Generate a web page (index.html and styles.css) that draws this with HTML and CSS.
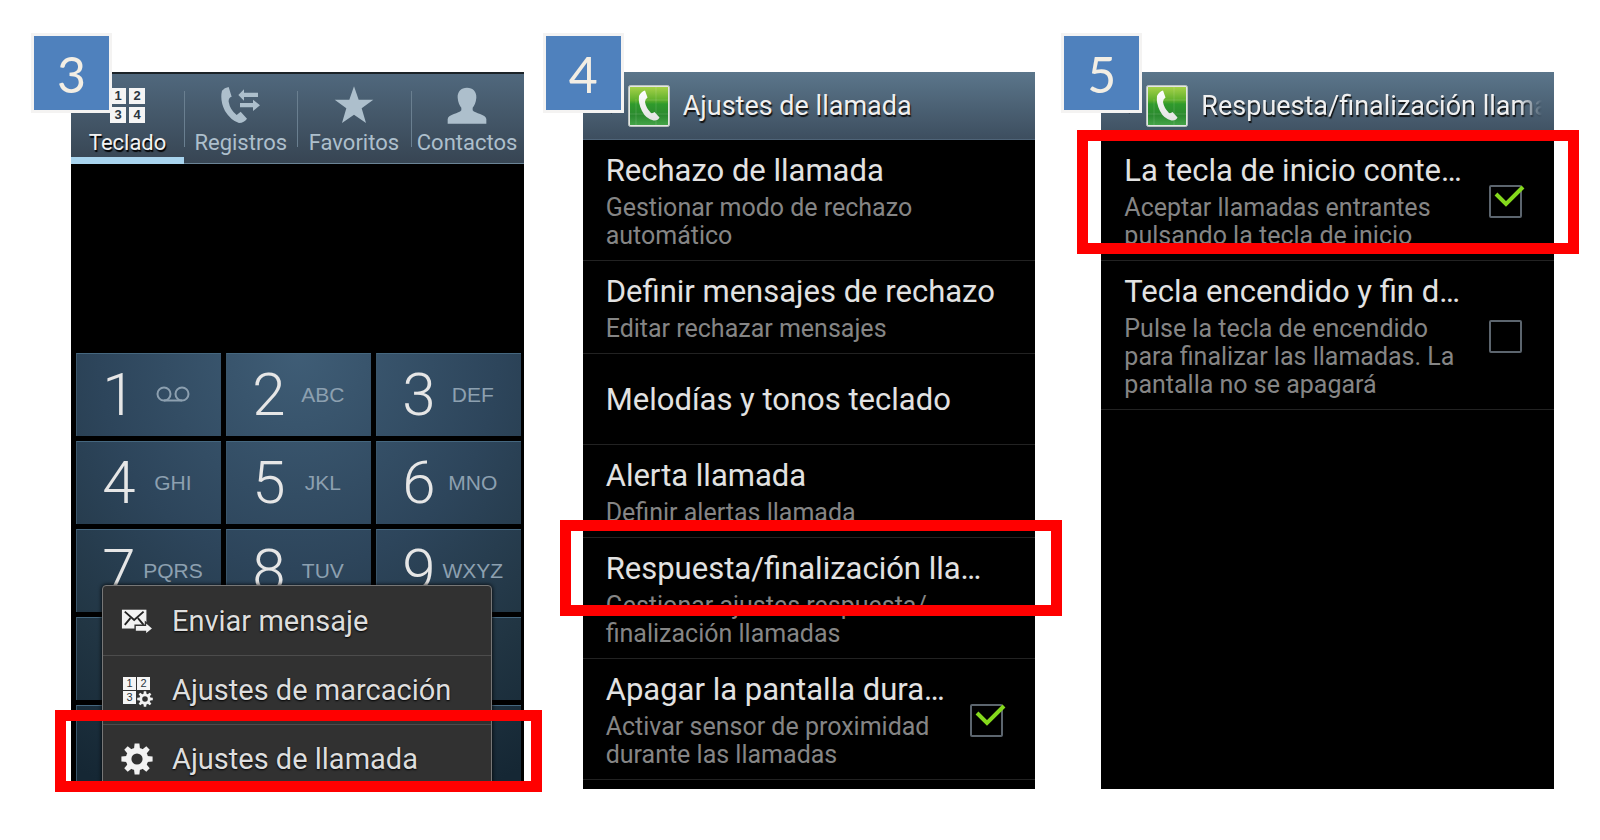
FILE: index.html
```html
<!DOCTYPE html>
<html lang="es">
<head>
    <meta charset="UTF-8">
    <meta name="viewport" content="width=device-width, initial-scale=1.0">
    <title>Ajustes de llamada</title>
    <link rel="stylesheet" href="styles.css">
</head>
<body>
    <!-- Shared shapes -->
    <svg class="sprite" aria-hidden="true">
        <defs>
            <linearGradient id="green" x1="0" y1="0" x2="0" y2="1">
                <stop offset="0" stop-color="#a5d148"/>
                <stop offset="0.35" stop-color="#5fb02c"/>
                <stop offset="0.45" stop-color="#2f9a2c"/>
                <stop offset="0.75" stop-color="#2b8a2f"/>
                <stop offset="1" stop-color="#44a348"/>
            </linearGradient>
            <linearGradient id="handset" x1="0" y1="0" x2="0" y2="1">
                <stop offset="0" stop-color="#fff"/>
                <stop offset="1" stop-color="#e2e2e2"/>
            </linearGradient>
            <symbol id="gear" viewBox="0 0 32 32">
                <circle cx="16" cy="16" r="8.4" fill="none" stroke="currentColor" stroke-width="5.6"/>
                <g fill="currentColor">
                    <path id="tooth" d="M13 6 L13.600 0.400 H18.400 L19 6 Z"/>
                    <use href="#tooth" transform="rotate(45 16 16)"/>
                    <use href="#tooth" transform="rotate(90 16 16)"/>
                    <use href="#tooth" transform="rotate(135 16 16)"/>
                    <use href="#tooth" transform="rotate(180 16 16)"/>
                    <use href="#tooth" transform="rotate(225 16 16)"/>
                    <use href="#tooth" transform="rotate(270 16 16)"/>
                    <use href="#tooth" transform="rotate(315 16 16)"/>
                </g>
            </symbol>
            <symbol id="call" viewBox="0 0 42 42">
                <rect x="0.5" y="0.5" width="41" height="41" rx="2" fill="#e4e6e4" stroke="#b9c2bf"/>
                <rect x="2" y="2" width="38" height="38" fill="url(#green)"/>
                <path d="M8 14 V40 M28 2 V40 M2 29 H40 M16 15 H40" stroke="#fff" stroke-opacity="0.13" fill="none"/>
                <path d="M11 11 Q13 6.500 17 5.500 L19.500 12.500 Q17 14 17 17 Q18 23 23 28 Q25 28.500 26.500 27 L31.500 32.500 Q30 36 25.500 35.500 Q18 34 14 26 Q10 18 11 11 Z" fill="url(#handset)"/>
            </symbol>
        </defs>
    </svg>

    <main class="steps">
        <section class="step">
            <div class="screen dialer">
                <nav class="tabs">
                    <a href="#" class="tab active">
                        <span class="mini-pad"><i>1</i><i>2</i><i>3</i><i>4</i></span>
                        Teclado
                    </a>
                    <a href="#" class="tab">
                        <svg class="tab-icon" viewBox="0 0 120 112"><path d="M3 13 Q10 4 23 2 L32 31 Q22 34 23 46 Q27 70 47 86 L59 76 L78 97 Q70 109 54 110 Q30 103 12 74 Q-4 42 3 13 Z M52 26 L69 9 V19 H111 V32 H69 V43 Z M117 57 L96 40 V50 H57 V63 H96 V74 Z"/></svg>
                        Registros
                    </a>
                    <a href="#" class="tab">
                        <svg class="tab-icon" viewBox="0 0 120 112"><path d="M60 0 L74 40 H118 L83 66 L96 110 L60 85 L24 110 L37 66 L2 40 H46 Z"/></svg>
                        Favoritos
                    </a>
                    <a href="#" class="tab">
                        <svg class="tab-icon" viewBox="0 0 120 112"><path d="M60 4 C78 4 89 16 88 34 C87 48 82 58 77 64 V72 C84 82 116 84 118 98 V112 H2 V98 C4 84 36 82 43 72 V64 C38 58 33 48 32 34 C31 16 42 4 60 4 Z"/></svg>
                        Contactos
                    </a>
                </nav>
                <div class="number"></div>
                <div class="keypad">
                    <button class="key"><b>1</b><span><svg class="voicemail" viewBox="0 0 34 16"><circle cx="8" cy="8" r="6.500"/><circle cx="26" cy="8" r="6.500"/><path d="M8 14.500 H26"/></svg></span></button>
                    <button class="key"><b>2</b><span>ABC</span></button>
                    <button class="key"><b>3</b><span>DEF</span></button>
                    <button class="key"><b>4</b><span>GHI</span></button>
                    <button class="key"><b>5</b><span>JKL</span></button>
                    <button class="key"><b>6</b><span>MNO</span></button>
                    <button class="key"><b>7</b><span>PQRS</span></button>
                    <button class="key"><b>8</b><span>TUV</span></button>
                    <button class="key"><b>9</b><span>WXYZ</span></button>
                    <button class="key" aria-label="Asterisco"></button>
                    <button class="key" aria-label="Cero"></button>
                    <button class="key" aria-label="Almohadilla"></button>
                    <button class="key" aria-label="Videollamada"></button>
                    <button class="key" aria-label="Llamar"></button>
                    <button class="key" aria-label="Borrar"></button>
                </div>
                <div class="menu">
                    <button class="menu-item">
                        <svg class="menu-icon" viewBox="0 0 34 34">
                            <rect x="1" y="5" width="26" height="20" fill="#f2f2f2"/>
                            <path d="M4 7 L14 16 L24 7 M4 21 L10 14 M24 21 L18 14" fill="none" stroke="#222" stroke-width="2"/>
                            <path d="M15 21.500 H26 V18 L34 25 L26 31.500 V28 H15 Z" fill="#f2f2f2" stroke="#313131" stroke-width="1.500"/>
                        </svg>
                        Enviar mensaje
                    </button>
                    <button class="menu-item">
                        <span class="pad-gear"><i>1</i><i>2</i><i>3</i><svg><use href="#gear"/></svg></span>
                        Ajustes de marcación
                    </button>
                    <button class="menu-item">
                        <svg class="menu-icon"><use href="#gear"/></svg>
                        Ajustes de llamada
                    </button>
                </div>
            </div>
            <div class="highlight highlight-menu"></div>
            <div class="badge">3</div>
        </section>

        <section class="step">
            <div class="screen">
                <header class="title-bar">
                    <svg class="back" viewBox="0 0 8 16"><path d="M7 1 L1 8 L7 15"/></svg>
                    <svg class="app-icon"><use href="#call"/></svg>
                    <h1>Ajustes de llamada</h1>
                </header>
                <a href="#" class="row">
                    <span class="text">
                        <strong>Rechazo de llamada</strong>
                        <small>Gestionar modo de rechazo<br>automático</small>
                    </span>
                </a>
                <a href="#" class="row">
                    <span class="text">
                        <strong>Definir mensajes de rechazo</strong>
                        <small>Editar rechazar mensajes</small>
                    </span>
                </a>
                <a href="#" class="row row-single">
                    <span class="text"><strong>Melodías y tonos teclado</strong></span>
                </a>
                <a href="#" class="row">
                    <span class="text">
                        <strong>Alerta llamada</strong>
                        <small>Definir alertas llamada</small>
                    </span>
                </a>
                <a href="#" class="row">
                    <span class="text">
                        <strong>Respuesta/finalización lla…</strong>
                        <small>Gestionar ajustes respuesta/<br>finalización llamadas</small>
                    </span>
                </a>
                <label class="row">
                    <span class="text">
                        <strong>Apagar la pantalla dura…</strong>
                        <small>Activar sensor de proximidad<br>durante las llamadas</small>
                    </span>
                    <span class="check">
                        <input type="checkbox" checked>
                        <svg viewBox="0 0 38 34"><path d="M7 9 L17 19 L34 2"/></svg>
                    </span>
                </label>
            </div>
            <div class="highlight highlight-answer"></div>
            <div class="badge">4</div>
        </section>

        <section class="step">
            <div class="screen">
                <header class="title-bar">
                    <svg class="back" viewBox="0 0 8 16"><path d="M7 1 L1 8 L7 15"/></svg>
                    <svg class="app-icon"><use href="#call"/></svg>
                    <h1 class="fade">Respuesta/finalización llama</h1>
                </header>
                <label class="row">
                    <span class="text">
                        <strong>La tecla de inicio conte…</strong>
                        <small>Aceptar llamadas entrantes<br>pulsando la tecla de inicio</small>
                    </span>
                    <span class="check">
                        <input type="checkbox" checked>
                        <svg viewBox="0 0 38 34"><path d="M7 9 L17 19 L34 2"/></svg>
                    </span>
                </label>
                <label class="row">
                    <span class="text">
                        <strong>Tecla encendido y fin d…</strong>
                        <small>Pulse la tecla de encendido<br>para finalizar las llamadas. La<br>pantalla no se apagará</small>
                    </span>
                    <span class="check">
                        <input type="checkbox">
                        <svg viewBox="0 0 38 34"><path d="M7 9 L17 19 L34 2"/></svg>
                    </span>
                </label>
            </div>
            <div class="highlight highlight-home"></div>
            <div class="badge">5</div>
        </section>
    </main>
</body>
</html>
```
FILE: styles.css
```css
:root {
    --red: #ff0000;
    --badge: #4f81bd;
    --title: #e2e2e2;
    --subtitle: #858585;
    --line: #222;
    --tab: #adbfcc;
}

* {
    box-sizing: border-box;
    margin: 0;
    padding: 0;
}

body {
    background: #fff;
    font-family: Roboto, "Noto Sans", sans-serif;
}

a {
    color: inherit;
    text-decoration: none;
}

button {
    border: 0;
    background: none;
    font: inherit;
    color: inherit;
    cursor: pointer;
}

.sprite {
    position: absolute;
    width: 0;
    height: 0;
}

.steps {
    display: flex;
    padding: 72px 46px 48px 71px;
}

.step {
    position: relative;
    flex: 1;
    min-width: 0;
    display: flex;
    flex-direction: column;
}

.step + .step {
    margin-left: 59px;
}

.step:last-child {
    margin-left: 66px;
}

.screen {
    position: relative;
    flex: 1;
    overflow: hidden;
    background: #000;
    padding-bottom: 9px;
}

.badge {
    position: absolute;
    top: -39px;
    left: -40px;
    width: 81px;
    height: 80px;
    border: 3px solid #f4f3f2;
    background: var(--badge);
    color: #f3eee4;
    font-family: Lato, "Open Sans", sans-serif;
    font-size: 50px;
    line-height: 76px;
    text-align: center;
}

.highlight {
    position: absolute;
    border: 11px solid var(--red);
    pointer-events: none;
}

.highlight-menu {
    top: 638px;
    left: -16px;
    right: -18px;
    height: 82px;
}

.highlight-answer {
    top: 448px;
    left: -23px;
    right: -27px;
    height: 96px;
}

.highlight-home {
    top: 58px;
    left: -24px;
    right: -25px;
    height: 124px;
}

/* Dialer */
.dialer {
    padding-bottom: 0;
}

.tabs {
    display: grid;
    grid-template-columns: repeat(4, minmax(0, 1fr));
    height: 92px;
    border-top: 2px solid #1c2328;
    border-bottom: 1px solid #6b8496;
    background: linear-gradient(#50687d, #374553);
}

.tab {
    position: relative;
    display: flex;
    flex-direction: column;
    align-items: center;
    gap: 5px;
    padding-top: 12px;
    color: var(--tab);
    font-size: 22px;
    line-height: 28px;
}

.tab + .tab::before {
    content: '';
    position: absolute;
    left: 0;
    top: 17px;
    width: 1px;
    height: 56px;
    background: #6a7f90;
}

.tab.active {
    color: #f2f2f2;
    text-shadow: 1px 2px 1px #000;
    border-bottom: 7px solid #a8d4ee;
}

.tab-icon {
    flex: none;
    width: 40px;
    height: 38px;
    fill: currentColor;
}

.mini-pad {
    display: grid;
    grid-template-columns: 16px 16px;
    gap: 3px;
    padding: 2px 0 1px;
    text-shadow: none;
}

.mini-pad i,
.pad-gear i {
    background: #f5f5f5;
    color: #2b3640;
    font: bold 13px/16px "Liberation Sans", sans-serif;
    text-align: center;
}

.number {
    height: 189px;
}

.keypad {
    display: grid;
    grid-template-columns: repeat(3, minmax(0, 1fr));
    grid-auto-rows: 83px;
    gap: 5px;
    margin: 0 3px 0 5px;
    background: radial-gradient(ellipse 100% 110% at 50% 0, #3f5d76, #2d455b 45%, #213543 75%, #152734);
}

/* The outline paints the black gaps over the shared gradient */
.key {
    display: grid;
    grid-template-columns: 28px minmax(0, 1fr);
    align-items: center;
    gap: 9px;
    padding: 0 17px 0 28px;
    border-top: 1px solid #45677f;
    border-left: 1px solid #3a566b;
    outline: 3px solid #000;
    color: #e6e6e6;
}

.key b {
    font-size: 60px;
    font-weight: 300;
    line-height: 80px;
    text-align: center;
    justify-self: center;
}

.key span {
    color: #8da0b0;
    font: 21px/24px "Liberation Sans", sans-serif;
    text-align: center;
}

.voicemail {
    width: 34px;
    height: 16px;
    fill: none;
    stroke: currentColor;
    stroke-width: 2;
}

.menu {
    position: absolute;
    top: 513px;
    left: 31px;
    right: 32px;
    border: 1px solid #777;
    border-radius: 4px 4px 0 0;
    background: #313131;
    box-shadow: 0 0 4px #000;
}

.menu-item {
    display: flex;
    align-items: center;
    gap: 18px;
    width: 100%;
    height: 69px;
    padding: 0 17px;
    color: #dedede;
    font-size: 29px;
    text-shadow: 0 1px 2px #000;
}

.menu-item + .menu-item {
    border-top: 1px solid #4c4c4c;
}

.menu-icon {
    width: 34px;
    height: 32px;
    color: #f2f2f2;
}

.pad-gear {
    position: relative;
    display: grid;
    grid-template-columns: 13px 13px;
    grid-auto-rows: 13px;
    gap: 1px;
    width: 34px;
    padding-left: 3px;
    text-shadow: none;
}

.pad-gear i {
    font: 11px/13px "Liberation Sans", sans-serif;
}

.pad-gear svg {
    width: 16px;
    height: 16px;
    color: #f2f2f2;
}

/* Settings */
.title-bar {
    display: flex;
    align-items: center;
    height: 68px;
    padding: 0 12px 0 22px;
    border-bottom: 1px solid #4f6478;
    background: linear-gradient(#5b768b, #3d4e5f);
}

.back {
    flex: none;
    width: 8px;
    height: 16px;
    margin-right: 15px;
    fill: none;
    stroke: #1f2a33;
    stroke-width: 2;
}

.app-icon {
    flex: none;
    width: 42px;
    height: 42px;
    margin-right: 13px;
}

.title-bar h1 {
    flex: 1;
    overflow: hidden;
    color: #f0f0f0;
    font-size: 27px;
    font-weight: 400;
    line-height: 40px;
    white-space: nowrap;
    text-shadow: 1px 2px 1px #111;
}

.title-bar .fade {
    mask-image: linear-gradient(90deg, #000 calc(100% - 24px), transparent);
}

.row {
    display: flex;
    align-items: center;
    justify-content: space-between;
    padding: 12px 32px 10px 23px;
    border-bottom: 1px solid var(--line);
}

.row-single {
    min-height: 91px;
}

.text {
    min-width: 0;
}

.row strong {
    display: block;
    color: var(--title);
    font-size: 31px;
    font-weight: 400;
    line-height: 38px;
    white-space: nowrap;
}

.row small {
    display: block;
    margin-top: 4px;
    color: var(--subtitle);
    font-size: 25px;
    line-height: 28px;
    white-space: nowrap;
}

.check {
    position: relative;
    flex: none;
    width: 33px;
    height: 33px;
}

.check input {
    display: block;
    appearance: none;
    width: 33px;
    height: 33px;
    border: 2px solid #5c656e;
    border-radius: 2px;
}

.check svg {
    display: none;
    position: absolute;
    top: 0;
    left: 0;
    width: 38px;
    height: 34px;
    fill: none;
    stroke: #84d81c;
    stroke-width: 4;
    pointer-events: none;
}

.check input:checked + svg {
    display: block;
}
```
